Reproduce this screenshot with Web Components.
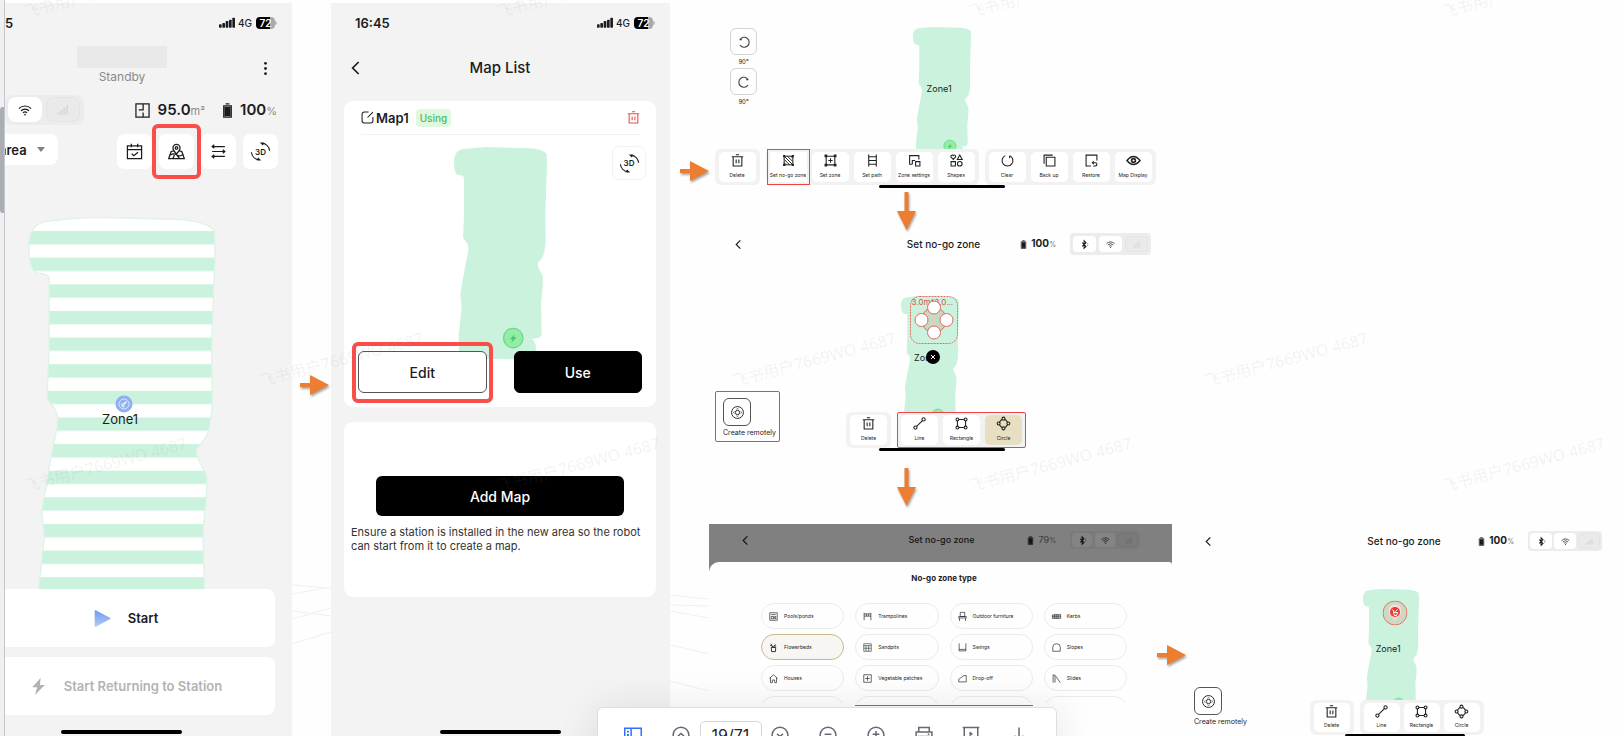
<!DOCTYPE html>
<html lang="en">
<head>
<meta charset="utf-8">
<title>Robot mower manual – page 19</title>
<style>
  html, body { margin: 0; height: 100%; }
  body { background: #fefefe; color: #1c1c1e; font-family: Inter, "Noto Sans CJK SC", sans-serif; overflow: hidden; position: relative; }
</style>
</head>
<body>
<manual-page></manual-page>
<script>
const ICONS = {
  back: '<path d="M16 3 7 12l9 9" stroke-width="2.6"/>',
  dots: '<g fill="currentColor" stroke="none"><circle cx="12" cy="2.5" r="2.6"/><circle cx="12" cy="12" r="2.6"/><circle cx="12" cy="21.5" r="2.6"/></g>',
  wifi: '<path d="M1.5 9.5a15 15 0 0 1 21 0M5 13.3a10 10 0 0 1 14 0M8.5 16.8a5 5 0 0 1 7 0"/><circle cx="12" cy="20" r="1.4" fill="currentColor" stroke="none"/>',
  bars: '<path d="M4 20v-4M9 20v-8M14 20V8M19 20V4" stroke-width="3"/>',
  signal: '<g fill="currentColor" stroke="none"><rect x="0" y="14" width="4" height="5" rx="1"/><rect x="5" y="12" width="4" height="7" rx="1"/><rect x="10" y="9" width="4" height="10" rx="1"/><rect x="15" y="7" width="4" height="12" rx="1"/><rect x="20" y="4" width="4" height="15" rx="1"/></g>',
  bt: '<path d="M6 7l10 10-5 5V2l5 5L6 17" stroke-width="2.8"/><path d="M20 8q2 4 0 8" stroke-width="1"/>',
  plan: '<path d="M1.500 1.500h21v21h-21zM13 1.500V11H6M13 22.500V15"/>',
  battery: '<path d="M6 4.500h12v18H6zM9 1.500h6"/><path d="M8 7h8v13H8z" fill="currentColor"/>',
  calendar: '<path d="M2 4h20v18H2zM2 9.500h20M7.500 1v5M16.500 1v5M8 15l3 3 6-5"/>',
  mappin: '<path d="M8.500 11 4.500 12 1 22h22l-3.500-10-4-1M3 17q6-3 9.500 0t9.500-1M12.500 17l4 5M7 22l2-5"/><path d="M12 15.500c-3-3.500-5-6-5-8.500a5 5 0 0 1 10 0c0 2.500-2 5-5 8.500z" fill="#fff"/><circle cx="12" cy="7" r="1.800"/>',
  sliders: '<path d="M3 5h18M3 12h18M3 19h18M6 2.500 3 5l3 2.500M18 9.500l3 2.500-3 2.500M6 16.500l-3 2.500 3 2.500" stroke-width="1.700"/>',
  spin: '<path d="M14 1.500A11 11 0 0 1 23.500 11M.500 13A11 11 0 0 0 10 22.500" stroke-width="1.500"/><path d="M11 .500l6 .500-2 3.500zM13 23.500l-6-.500 2-3.500z" fill="currentColor" stroke="none"/>',
  edit: '<path d="M14 2H6a4 4 0 0 0-4 4v12a4 4 0 0 0 4 4h12a4 4 0 0 0 4-4V11M12 12 22 2" stroke-width="1.900"/>',
  trash: '<path d="M1.500 5h21M9 1.500h6M4 5v17h16V5M9.500 10v7M14.500 10v7"/>',
  bolt: '<path d="M15 0 3 13h7L7 24l14-14h-7z" fill="currentColor" stroke="none"/>',
  play: '<defs><linearGradient id="g" x1="0" y1="0" x2="0" y2="1"><stop offset="0" stop-color="#6f9bea"/><stop offset="1" stop-color="#b3cbf7"/></linearGradient></defs><path d="M1 1.500Q1 0 2.500.500l20 10.500q1.500 1 0 2L2.500 23.500Q1 24 1 22.500z" fill="url(#g)" stroke="none"/>',
  ccw: '<path d="M3 7.500h5M4 7A10 10 0 1 1 4 18" stroke-width="2.200"/>',
  cw: '<path d="M21 7.500h-5M20 7A10 10 0 1 0 20 18" stroke-width="2.200"/>',
  nogo: '<path d="M4 4h16v16H4zM4 10l10 10M4 16l4 4M5 5l15 15M10 4l10 10M16 4l4 4" stroke-width="1.800"/><path d="M2 2h4v4H2zM18 2h4v4h-4zM2 18h4v4H2zM18 18h4v4h-4z" fill="currentColor" stroke="none"/>',
  zone: '<path d="M4 4h16v16H4zM12 8v8M8 12h8"/><path d="M1 1h5v5H1zM18 1h5v5h-5zM1 18h5v5H1zM18 18h5v5h-5z" fill="currentColor" stroke="none"/>',
  path: '<path d="M5 1v22M19 1v22M5 5h14M5 12h14M5 19h14"/>',
  settings: '<path d="M8 19H3V3h17v7M8 19v-7h5M14 14h8v8h-8z"/>',
  shapes: '<path d="M6 10 2 6a2.400 2.400 0 0 1 4-3 2.400 2.400 0 0 1 4 3zM18 2l4.500 8h-9zM2 14h8v8H2z"/><circle cx="18" cy="18" r="4.300"/>',
  clear: '<path d="M8 3a10 10 0 1 0 8 0M16 3v5"/>',
  backup: '<path d="M6 6h16v16H6zM2 18V2h16"/>',
  restore: '<path d="M11 22H2V2h20v10M15 22h4a3 3 0 0 0 0-6h-5M16 13.500 13.500 16l2.500 2.500" />',
  eye: '<path d="M0 12Q12-3 24 12 12 27 0 12z" stroke-width="2.800"/><circle cx="12" cy="12" r="3.500" stroke-width="3"/>',
  line: '<circle cx="4.500" cy="19.500" r="3"/><circle cx="19.500" cy="4.500" r="3"/><path d="M6.500 17.500l11-11"/>',
  rect: '<path d="M7 4.500h10M7 19.500h10M4.500 7v10M19.500 7v10"/><circle cx="4.500" cy="4.500" r="2.700"/><circle cx="19.500" cy="4.500" r="2.700"/><circle cx="4.500" cy="19.500" r="2.700"/><circle cx="19.500" cy="19.500" r="2.700"/>',
  circle: '<path d="M4.500 9.500 9 4.500M15 4.500l4.500 5M4.500 14.500l4.500 5M15 19.500l4.500-5"/><circle cx="12" cy="3" r="2.700"/><circle cx="12" cy="21" r="2.700"/><circle cx="3" cy="12" r="2.700"/><circle cx="21" cy="12" r="2.700"/>',
  remote: '<circle cx="12" cy="12" r="11" stroke-width="1.700"/><circle cx="12" cy="12" r="4" stroke-width="1.700"/><path d="M10 6l2-1.500L14 6M10 18l2 1.500 2-1.500M6 10l-1.500 2L6 14M18 10l1.500 2-1.500 2" stroke-width="1.200"/>',
  pool: '<path d="M2 2h20v20H2zM6 7h12M6 12h6v6H6zM15 12h3v6h-3z"/>',
  tramp: '<path d="M3 2v20M21 2v20M3 5h18M3 11h18M9 5v6M15 5v6"/>',
  chair: '<path d="M6 1h12v11H6zM2 12h20v4H2zM4 16v8M20 16v8"/>',
  kerb: '<path d="M1 8h22v9H1zM1 12.500h22M5 8l3-3M10 8l3-3M15 8l3-3M20 8l3-3M6 8v9M11 8v9M16 8v9" stroke-width="1.800"/>',
  flower: '<path d="M6 12h12l-1 11H7zM11 12 5 2M12 11l5-7M3 6l5 2M13 8h6" stroke-width="2.400"/>',
  sand: '<path d="M2 2h20v20H2zM2 7h20M8 7v15M15 7v15M2 14h20" stroke-width="1.500"/>',
  swing: '<path d="M3 1v20h18V1M3 17h18"/>',
  slope: '<path d="M2 22V11a10 9 0 0 1 20 0v11z"/>',
  house: '<path d="M1 12 12 2l11 10M4 10v13h5v-7h6v7h5V10"/>',
  veg: '<path d="M2 2h20v20H2zM12 6v12M6 12h12"/>',
  drop: '<path d="M2 21V14L16 4h6v17z"/>',
  slide: '<path d="M3 23V2M8 23V6M3 3h5l14 20"/>',
  panel: '<path d="M1 3h22v20H1zM9.500 3v20"/><path d="M4 7.500h2.500M4 12h2.500M4 16.500h2.500" stroke-width="2.400"/>',
  up: '<circle cx="12" cy="12" r="10.500"/><path d="M8 13.500l4-3.500 4 3.500"/>',
  down: '<circle cx="12" cy="12" r="10.500"/><path d="M8 10.500l4 3.500 4-3.500"/>',
  minus: '<circle cx="12" cy="12" r="10.500"/><path d="M7.500 11h9"/>',
  plus: '<circle cx="12" cy="12" r="10.500"/><path d="M7.500 11h9M12 6.500v9"/>',
  print: '<path d="M5 8V2h14v6M5 18H1.500V8h21v10H19M5 14h14v9H5zM17 11h2"/>',
  present: '<path d="M1 2h22M3 2v17h18V2M12 19v5"/><path d="M10.500 8l3.500 2.500-3.500 2.500z" fill="currentColor" stroke-width="1"/>',
  save: '<path d="M12 2v17M6 13l6 6 6-6M3 23h18"/>'
};

class Base extends HTMLElement {
  connectedCallback() {
    if (this.shadowRoot) return;
    const root = this.attachShadow({ mode: 'open' });
    const t = document.createElement('template');
    t.innerHTML = '<style>*{box-sizing:border-box}button,input,select{font:inherit;color:inherit;margin:0;padding:0;border:0;background:none}' + this.css() + '</style>' + this.html();
    root.append(t.content.cloneNode(true));
  }
  a(name, fallback = '') { return this.getAttribute(name) || fallback; }
}
const define = (name, css, html) => customElements.define(name, class extends Base {
  css() { return css; }
  html() { return html(this); }
});

define('ui-icon', `:host{display:block;flex:none;width:var(--icon,14px);height:var(--icon,14px)}svg{display:block;width:100%;height:100%;overflow:visible}`,
  e => `<svg viewBox="0 0 24 24" fill="none" stroke="currentColor" stroke-width="${e.a('weight', '2')}" aria-hidden="true">${ICONS[e.a('name')]}</svg>`);

/* Orange flow arrow; points right, or down with the "down" attribute */
define('flow-arrow', `:host{display:block;width:29px;height:20px}:host([down]){width:19px;height:39px}svg{display:block;width:100%;height:100%;overflow:visible;filter:drop-shadow(1px 2px 1px rgba(0,0,0,.35))}`,
  e => e.hasAttribute('down')
    ? '<svg viewBox="0 0 19 39"><path d="M7.500 0h4v19H19L9.500 38 0 19h7.500z" fill="#ed7d31"/></svg>'
    : '<svg viewBox="0 0 29 20"><path d="M0 8h10V0l19 10-19 10v-8H0z" fill="#ed7d31"/></svg>');

/* Lawn outline with optional mowing stripes; slotted labels are pinned on it */
define('zone-map', `:host{display:block;position:relative;width:58px}svg{display:block;width:100%;overflow:visible}
  ::slotted(*){position:absolute;transform:translate(-50%,-50%);left:45%;top:46%;white-space:nowrap}`,
  e => {
    const d = 'M372 490Q370 455 395 448Q430 443 470 441L600 445Q640 449 649 462L650 500L648 550L645 640L646 710Q646 745 638 768Q628 782 622 788Q622 800 634 820L638 830L637 860L632 910L634 995Q634 1012 620 1013L604 1014Q616 1022 617 1040L616 1065Q612 1077 600 1077L470 1074L387 1074L386 1000L395 920L391 880L405 800L415 750Q416 732 406 722L399 712L402 640L402 535Q402 525 385 525Q373 522 372 490z';
    const s = e.hasAttribute('striped');
    return `<svg viewBox="372 441 278 636" aria-hidden="true"><defs><pattern id="s" patternUnits="userSpaceOnUse" x="0" y="462" width="300" height="39.800"><rect width="300" height="20" fill="#caf2dd"/></pattern></defs>
    <path d="${d}" fill="${s ? '#fff' : '#caf2dd'}"/>${s ? `<path d="${d}" fill="url(#s)" stroke="#dcf3e8" stroke-width="2"/>` : ''}
    ${s ? '' : '<circle cx="549" cy="1012" r="29" fill="#94eda6" stroke="#6fd98a" stroke-width="4"/><path d="M554 1000l-15 16h8l-4 11 16-17h-9z" fill="#43c766"/>'}</svg><slot></slot>`;
  });

define('status-bar', `:host{display:flex;align-items:center;height:39px;font-size:13px;font-weight:600}
  span.t{flex:1}.net{font-size:10px;font-weight:500;margin:0 4px 0 3px}ui-icon{--icon:16px}
  .b{width:19px;height:12px;border-radius:4px;background:linear-gradient(90deg,#000 72%,#aaa 72%);color:#fff;font-size:10px;line-height:12px;text-align:center}
  .b+i{width:2px;height:4px;background:#bbb;border-radius:0 2px 2px 0}`,
  e => `<span class="t">${e.a('time')}</span><ui-icon name="signal"></ui-icon><span class="net">4G</span><span class="b">72</span><i></i>`);

define('home-bar', `:host{display:block;height:4px;border-radius:2px;background:#000;width:121px}`, () => '');

/* Small toggles in a tray */
define('link-tray', `:host{display:flex;gap:var(--gap,3px);padding:var(--pad,3px);background:var(--tray,#ececec);border-radius:var(--r,4px)}
  button{width:var(--w,23px);height:var(--h,16px);background:var(--key,#fff);border-radius:var(--r,4px);display:grid;place-items:center;--icon:var(--i,9px)}
  button:last-child{background:var(--off,#eaeaea);border:1px solid var(--off-line,#e4e4e4);color:var(--off-ink,#d8d8d8)}`,
  e => e.a('icons', 'bt wifi bars').split(' ').map(n => `<button aria-label="${n}"><ui-icon name="${n}"></ui-icon></button>`).join(''));

define('icon-button', `:host{display:block;position:relative}button{display:grid;place-items:center;width:34px;height:34px;border-radius:7px;background:#fff;--icon:17px;position:relative}
  :host([name=spin]) button{--icon:19px}
  :host([large]) button{width:35px;height:35px}:host([outlined]) button{border:1px solid #f3f3f3}
  b{position:absolute;inset:0;display:grid;place-items:center;font-size:8px;font-weight:600}
  :host([marked])::after{content:"";position:absolute;inset:-10px -7px;border:4px solid #f94e4a;border-radius:6px}`,
  e => `<button aria-label="${e.a('label')}"><ui-icon name="${e.a('name')}" weight="1.800"></ui-icon>${e.a('name') === 'spin' ? '<b>3D</b>' : ''}</button>`);

define('mower-phone', `:host{display:block;background:#f3f3f3;overflow:hidden}
  status-bar{padding-right:15px}
  header{display:grid;grid-template-columns:1fr;align-items:center;position:relative;padding:4px 53px 0 0;justify-items:center}
  .name{width:90px;height:22px;background:#e9e9e9}.state{font-size:12px;line-height:16px;color:#8a8a8a;margin-top:1px}
  .more{position:absolute;right:20px;top:20px;--icon:13px}
  .row{display:flex;justify-content:space-between;align-items:flex-start}
  .links{margin-top:10px;padding-right:15px;align-items:center}
  link-tray{--pad:2px 4px 3px 3px;--gap:4px;--r:8px;--w:34px;--h:25px;--i:14px}
  .stats{display:flex;align-items:center;font-size:15px;font-weight:600;line-height:20px}.stats ui-icon{--icon:15px;margin-right:8px}.stats ui-icon+span+ui-icon{margin:0 5px 0 15px}
  .stats small{font-size:11px;font-weight:400;color:#8a8a8a}
  .tools{margin-top:9px;padding-right:14px}
  .sel{position:relative;height:31px;width:53px;background:#fff;border-radius:0 8px 8px 0;display:flex;align-items:center}
  select{appearance:none;font-size:13px;font-weight:600;margin-left:-6px;width:52px;height:31px}
  .sel i{position:absolute;right:13px;top:13px;border:4px solid transparent;border-top:5px solid #808080;border-bottom:0}
  .btns{display:flex;gap:7px}
  .map{height:372px;overflow:hidden;margin-top:48px;padding-left:24px}
  zone-map{width:186px}.robot{top:44%;left:51%;width:17px;height:17px;border-radius:50%;background:#8eb0f0}
  .robot svg{display:block}.lbl{font-size:13px;line-height:16px;top:48%;left:49%;margin-top:-2px}
  .act{display:flex;align-items:center;justify-content:center;width:calc(100% - 17px);height:58px;background:#fff;border-radius:0 8px 8px 0;font-size:13px;font-weight:600;padding-right:28px;gap:17px;margin-bottom:10px;--icon:17px}
  .ret{color:#b3b3b3}
  home-bar{margin:15px 0 0 56px}`,
  () => `<status-bar time="5"></status-bar>
  <header><div class="name"></div><div class="state">Standby</div><button class="more" aria-label="More"><ui-icon name="dots"></ui-icon></button></header>
  <div class="row links"><link-tray icons="wifi bars"></link-tray>
    <div class="stats"><ui-icon name="plan"></ui-icon><span>95.0<small>m²</small></span><ui-icon name="battery"></ui-icon><span>100<small>%</small></span></div></div>
  <div class="row tools"><div class="sel"><select aria-label="Area"><option>area</option></select><i></i></div>
    <div class="btns"><icon-button large name="calendar" label="Schedule"></icon-button><icon-button large marked name="mappin" label="Maps"></icon-button><icon-button large name="sliders" label="Settings"></icon-button><icon-button large name="spin" label="3D view"></icon-button></div></div>
  <div class="map"><zone-map striped><span class="robot"><svg viewBox="0 0 17 17" width="17" height="17" fill="none" stroke="#dbe6fd"><circle cx="8.500" cy="8.500" r="5"/><path d="M8 9l3-3M7 8a2 2 0 0 0 2 3" stroke-width="2"/></svg></span><span class="lbl">Zone1</span></zone-map></div>
  <button class="act"><ui-icon name="play"></ui-icon><span>Start</span></button>
  <button class="act ret"><ui-icon name="bolt"></ui-icon><span>Start Returning to Station</span></button>
  <home-bar></home-bar>`);

define('list-phone', `:host{display:block;background:#f3f3f3;padding:0 14px 0 13px;overflow:hidden}
  status-bar{padding:0 1px 0 11px}
  header{display:grid;grid-template-columns:1fr auto 1fr;align-items:center;height:50px;margin:1px 0 8px}
  header button{--icon:16px;padding-left:4px;justify-self:start}h1{margin:0;font-size:15px;font-weight:500;line-height:20px}
  section{background:#fff;border-radius:9px}
  .head{display:flex;align-items:center;height:34px;margin:0 15px 0 17px;border-bottom:1px solid #f3f3f3;font-size:13px;font-weight:600;--icon:13px}
  .head b{font-weight:600;flex:none;margin-left:2px}.tag{background:#dff8df;color:#4dbd5e;font-size:10px;font-weight:500;line-height:18px;border-radius:4px;padding:0 4px;margin:0 auto 0 7px}
  .del{color:#e2524a;margin-right:1px}
  .map{display:grid;grid-template-columns:1fr auto 1fr;height:216px;padding:11px 10px 0}
  .map zone-map{grid-column:2;width:93px;margin-top:1px}.map icon-button{justify-self:end}
  .btns{display:flex;gap:27px;padding:0 14px 14px;position:relative}
  .btns div{flex:1;position:relative}.btns button{width:100%;height:42px;border-radius:6px;border:1px solid #555;background:#fff;font-size:14px;font-weight:500}
  .btns .use{background:#000;color:#fff;border-color:#000}
  .mark::after{content:"";position:absolute;inset:-9px -6px -10px;border:4px solid #f94e4a;border-radius:6px;pointer-events:none}
  .new{margin-top:15px;padding:54px 7px 44px}
  .new button{display:block;width:calc(100% - 50px);margin:0 auto 9px;height:40px;border-radius:6px;background:#000;color:#fff;font-size:14px;font-weight:500}
  p{margin:0;font-size:11px;line-height:14px;color:#333}
  home-bar{margin:133px auto 0}`,
  () => `<status-bar time="16:45"></status-bar>
  <header><button aria-label="Back"><ui-icon name="back"></ui-icon></button><h1>Map List</h1></header>
  <section><div class="head"><ui-icon name="edit"></ui-icon><b>Map1</b><span class="tag">Using</span><button class="del" aria-label="Delete map"><ui-icon name="trash"></ui-icon></button></div>
    <div class="map"><zone-map></zone-map><icon-button outlined name="spin" label="3D view"></icon-button></div>
    <div class="btns"><div class="mark"><button>Edit</button></div><div><button class="use">Use</button></div></div></section>
  <section class="new"><button>Add Map</button><p>Ensure a station is installed in the new area so the robot can start from it to create a map.</p></section>
  <home-bar></home-bar>`);

define('stage-header', `:host{display:grid;grid-template-columns:1fr auto 1fr;align-items:center;font-size:var(--fs,10px)}
  .bk{--icon:11px;justify-self:start;margin-left:-3px}.bk ui-icon{display:block}h2{margin:0;font-size:inherit;font-weight:500;line-height:14px}
  .r{display:flex;align-items:center;justify-self:end;font-weight:var(--num,700);line-height:14px;--icon:9px}.r ui-icon{margin-right:3px}
  .r>span{color:var(--charge,inherit)}small{font-size:7px;font-weight:400;color:var(--unit,#777)}link-tray{margin-left:14px}`,
  e => `<button class="bk" aria-label="Back"><ui-icon name="back" weight="3"></ui-icon></button><h2>Set no-go zone</h2>
  <div class="r"><ui-icon name="battery"></ui-icon><span>${e.a('charge')}<small>%</small></span><link-tray></link-tray></div>`);

/* Bottom toolbar: groups split by "|", items "icon:label", "*" marks, "+" selects */
define('tool-dock', `:host{display:flex;justify-content:center;gap:6px}
  div{display:flex;gap:var(--tg,5px);padding:3px 4px;background:#f2f2f2;border-radius:6px}
  :host([mark-last]) div:last-child{outline:1px solid #f2423f;outline-offset:-1px;border-radius:2px}
  button{width:var(--tw,37px);height:var(--th,30px);background:#fff;border-radius:5px;display:flex;flex-direction:column;align-items:center;justify-content:space-between;padding:2px 0 4px;--icon:13px;font-size:5px;line-height:6px;color:#222;white-space:nowrap}
  .m{outline:1px solid #f2423f;outline-offset:2px;border-radius:0}.on{background:#e8dfc3}`,
  e => e.a('items').split('|').map(g => '<div>' + g.split(',').map(i => {
    const [n, l] = i.replace(/[*+]/, '').split(':');
    return `<button class="${i[0] === '*' ? 'm' : i[0] === '+' ? 'on' : ''}"><ui-icon name="${n}"></ui-icon><span>${l}</span></button>`;
  }).join('') + '</div>').join(''));

define('remote-button', `:host{display:block;font-size:7px;line-height:10px}button{display:block;text-align:left;white-space:nowrap}
  span{display:grid;place-items:center;width:28px;height:28px;border:1px solid #555;border-radius:6px;--icon:13px;margin-bottom:2px;background:#fff}
  :host([marked]) button{outline:1px solid #f2423f;padding:6px 3px 3px 7px;border-radius:1px}`,
  () => '<button><span><ui-icon name="remote"></ui-icon></span>Create remotely</button>');

define('zone-stage', `:host{display:grid;grid-template-columns:1fr auto 1fr;grid-template-rows:var(--map-h) auto}
  .map{grid-area:1/1/2/4;justify-self:center;overflow:hidden;padding:var(--map-top) 20px 0}
  .side{grid-area:1/1/3/2;align-self:end}.dock{grid-area:2/1/3/4;position:relative}.side{z-index:1}`,
  () => '<div class="map"><slot name="map"></slot></div><div class="side"><slot name="side"></slot></div><div class="dock"><slot name="dock"></slot></div>');

define('zone-types', `:host{display:block;background:#808080;overflow:hidden}
  stage-header{--fs:9px;padding:7px 32px 13px 34px;--w:20px;--h:14px;--pad:2px;--gap:3px;color:#141414;
    --tray:#7a7a7a;--key:#848484;--off:#7a7a7a;--off-line:#757575;--off-ink:#6c6c6c;--charge:#444;--unit:#444;--num:500}
  .sheet{background:#fefefe;border-radius:10px 3px 0 0;padding:10px 45px 0 52px}
  h3{margin:0 0 19px;text-align:center;font-size:8px;line-height:12px;font-weight:700}
  .g{display:grid;grid-template-columns:repeat(4,1fr);gap:5px 11px}.list{height:100px;overflow:hidden}
  .g button,.g i{height:26px;border:1px solid #ebebeb;border-radius:13px;display:flex;align-items:center;gap:6px;padding-left:7px;font-size:5px;color:#222;--icon:9px;white-space:nowrap}
  .g .on{background:#f7f6f2;border-color:#c9b88c}.edge{padding-top:2px;height:40px}.edge hr{grid-column:2/4;width:100%;margin:0;border:0;height:1px;background:#f2423f}`,
  () => `<stage-header charge="79"></stage-header><div class="sheet"><h3>No-go zone type</h3><div class="g list">${
    [['pool','Pools/ponds'],['tramp','Trampolines'],['chair','Outdoor furniture'],['kerb','Kerbs'],['flower','Flowerbeds'],['sand','Sandpits'],['swing','Swings'],['slope','Slopes'],['house','Houses'],['veg','Vegetable patches'],['drop','Drop-off'],['slide','Slides']]
    .map(([n, l]) => `<button class="${n === 'flower' ? 'on' : ''}"><ui-icon name="${n}" weight="1.800"></ui-icon><span>${l}</span></button>`).join('')}<i></i><i></i><i></i><i></i></div><div class="g edge"><hr></div></div>`);

define('no-go-circle', `:host{display:block;width:48px;height:48px}svg{display:block;position:relative;overflow:visible}.t{position:absolute;top:0;left:2px;font-size:8px;line-height:12px;color:#d9534c}`,
  () => `<span class="t">3.0m*3.0...</span><svg viewBox="0 0 48 48" width="48" height="48" fill="none" stroke="#e06a64"><rect x=".500" y=".500" width="47" height="47" rx="9" stroke-dasharray="2 1"/><circle cx="24" cy="24" r="12.500" fill="#c9d8c0"/><g fill="#fff"><circle cx="24" cy="11.500" r="6.500"/><circle cx="11.500" cy="24" r="6.500"/><circle cx="36.500" cy="24" r="6.500"/><circle cx="24" cy="36.500" r="6.500"/></g></svg>`);

define('pdf-bar', `:host{position:absolute;left:calc(50% + 15px);bottom:-26px;transform:translateX(-50%);width:460px;height:55px;display:flex;align-items:center;background:#fff;border:1px solid #dcdee0;border-radius:6px;box-shadow:0 4px 40px rgba(31,35,41,.12);color:#646a73;--icon:18px;padding:0 28px 0 26px;justify-content:space-between}
  .on{color:#3370ff}input{width:62px;height:28px;border:1px solid #d5d7da;border-radius:5px;text-align:center;font-size:16px;color:#1f2329;margin:0 -20px}`,
  () => `<button class="on" aria-label="Sidebar"><ui-icon name="panel"></ui-icon></button><button aria-label="Previous page"><ui-icon name="up"></ui-icon></button><input aria-label="Page" value="19/71">` +
    ['down', 'minus', 'plus', 'print', 'present', 'save'].map(n => `<button aria-label="${n}"><ui-icon name="${n}"></ui-icon></button>`).join(''));

define('water-marks', `:host{position:absolute;inset:0;overflow:hidden;pointer-events:none;font:16px "Noto Sans","Noto Sans CJK SC",sans-serif;color:rgba(128,128,128,.1)}
  span{position:absolute;line-height:20px;white-space:nowrap;transform-origin:0 100%;transform:rotate(-15deg)}`,
  () => [[26, 2], [499, 2], [971, 2], [1444, 2], [262, 371], [735, 371], [1207, 371], [26, 476], [499, 476], [971, 476], [1444, 476]]
    .map(([x, y]) => `<span style="left:${x}px;top:${y}px">飞书用户7669WO 4687</span>`).join(''));

define('manual-page', `:host{display:grid;height:100%;overflow:hidden;grid-template-columns:5px minmax(0,287fr) minmax(0,39fr) minmax(0,339fr) minmax(0,39fr) minmax(0,463fr) minmax(0,452fr)}
  .scroll{background:#eff0f2;border-right:1px solid #c4c7cb;padding-top:107px}.scroll i{display:block;height:106px;background:#aaadb1;border-radius:3px 0 0 3px}
  mower-phone,list-phone{margin-top:3px}
  .gut{position:relative}.gut svg{position:absolute;left:0;top:580px;width:100%;z-index:-1}
  .a1{margin:375px 0 0 8px}.a2{margin:161px 0 0 10px}
  .mid{position:relative}.rot{display:grid;justify-items:center;width:27px;margin:0 0 77px 21px;font-size:6px;line-height:13px}
  .rot button{width:27px;height:27px;border:1px solid #d4d4d4;border-radius:6px;display:grid;place-items:center;--icon:12px;color:#444}
  .s1{--map-h:149px;--map-top:27px}.s2{--map-h:157px;--map-top:41px}.s4{--map-h:149px;--map-top:38px}
  .s1 tool-dock{padding-right:11px}.s2 tool-dock{padding-right:9px}.s2 zone-map{margin-right:22px}.s1 zone-map{margin-left:3px}
  .z{font-size:9px}
  flow-arrow[down]{margin:4px auto 2px 188px}.home{width:126px;height:3px;margin:0 auto 0 170px}
  .mid>stage-header{padding:0 21px 0 27px}.mid flow-arrow.d2{margin:17px auto 17px 188px}
  .s2 no-go-circle{left:57%;top:18%}
  .x{left:56%;top:46%;width:14px;height:14px;border-radius:50%;background:#000}.x svg{display:block}
  .s2 remote-button{margin:0 0 7px 7px}
  .a4{position:absolute;left:calc(100% - 15px);top:645px;z-index:2}
  .right{padding-top:531px}.right>stage-header{padding:0 22px 0 34px;--w:22px;--h:16px;--pad:2px;--gap:2px}
  .s4 zone-map{width:56px;margin-right:14px}.s4 tool-dock{--tw:36px;--tg:4px;--th:29px;padding-right:3px}.s4 remote-button{margin:0 0 8px 22px}
  .pin{left:58%;top:19%;width:25px;height:25px}.pin svg{display:block}
  .right .home{width:120px;height:3px;margin:-1px auto 0 173px;position:relative}`,
  () => `<div class="scroll"><i></i></div>
  <mower-phone></mower-phone>
  <div class="gut"><svg viewBox="0 0 39 70" fill="none" stroke="#f0f0f0"><path d="M0 5l39 3M0 14l39-7M0 31l39 5M0 39l39-11M0 64l39-12"/></svg><flow-arrow class="a1"></flow-arrow></div>
  <list-phone></list-phone>
  <div class="gut"><svg viewBox="0 0 39 120" fill="none" stroke="#f0f0f0"><path d="M0 15l39 4M0 25l39 1M0 31l39 7M0 65l39 9M0 101l39 10"/></svg><flow-arrow class="a2"></flow-arrow></div>
  <div class="mid">
    <zone-stage class="s1"><zone-map slot="map"><span class="z">Zone1</span></zone-map>
      <div slot="side" class="rot"><button aria-label="Rotate left"><ui-icon name="ccw"></ui-icon></button><span>90°</span><button aria-label="Rotate right"><ui-icon name="cw"></ui-icon></button><span>90°</span></div>
      <tool-dock slot="dock" items="trash:Delete|*nogo:Set no-go zone,zone:Set zone,path:Set path,settings:Zone settings,shapes:Shapes|clear:Clear,backup:Back up,restore:Restore,eye:Map Display"></tool-dock></zone-stage>
    <home-bar class="home"></home-bar>
    <flow-arrow down></flow-arrow>
    <stage-header charge="100"></stage-header>
    <zone-stage class="s2"><zone-map slot="map"><span class="z">Zone1</span><no-go-circle></no-go-circle><span class="x"><svg viewBox="0 0 14 14" width="14" height="14" stroke="#fff"><path d="M5 5l4 4M9 5l-4 4"/></svg></span></zone-map>
      <remote-button marked slot="side"></remote-button>
      <tool-dock mark-last slot="dock" items="trash:Delete|line:Line,rect:Rectangle,+circle:Circle"></tool-dock></zone-stage>
    <home-bar class="home"></home-bar>
    <flow-arrow down class="d2"></flow-arrow>
    <zone-types></zone-types>
    <flow-arrow class="a4"></flow-arrow>
  </div>
  <div class="right">
    <stage-header charge="100"></stage-header>
    <zone-stage class="s4"><zone-map slot="map"><span class="z">Zone1</span><span class="pin"><svg viewBox="0 0 25 25" width="25" height="25"><circle cx="12.500" cy="12.500" r="12" fill="#cdd9c4" stroke="#e5766c"/><path d="M12.500 20 8 15a6.500 6.500 0 1 1 9 0z" fill="#f6ded8"/><circle cx="12.500" cy="11.500" r="5" fill="#ee3a34"/><path d="M11 12h4l-1 3h-2zM12 12l-2-3M13 11l2-2" stroke="#fff" fill="none"/></svg></span></zone-map>
      <remote-button slot="side"></remote-button>
      <tool-dock slot="dock" items="trash:Delete|line:Line,rect:Rectangle,circle:Circle"></tool-dock></zone-stage>
    <home-bar class="home"></home-bar>
  </div>
  <water-marks></water-marks>
  <pdf-bar></pdf-bar>`);
</script>
</body>
</html>
